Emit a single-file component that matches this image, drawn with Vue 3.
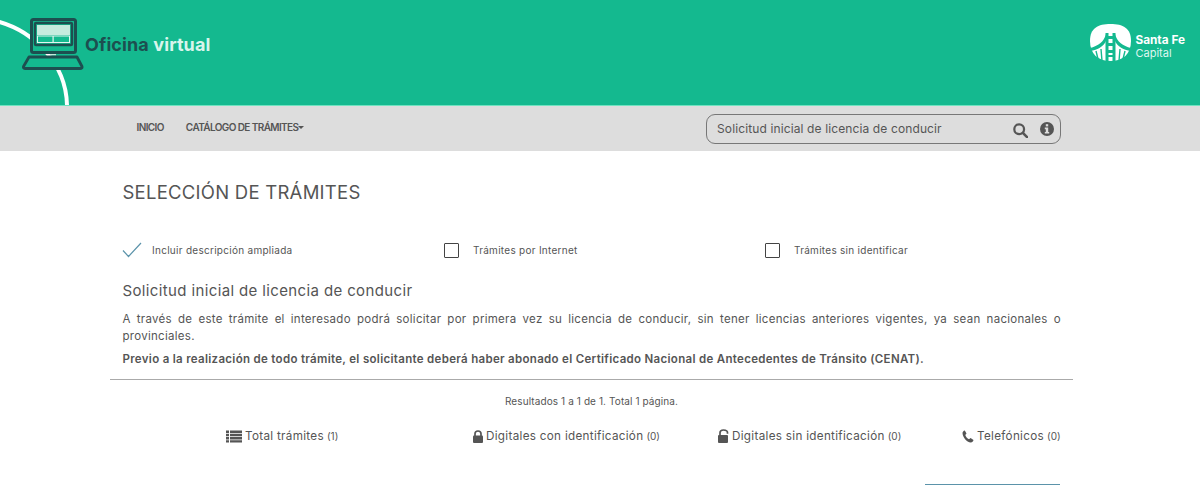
<script setup>
const stats = [
  { key: 'total', label: 'Total trámites', count: '(1)' },
  { key: 'lock', label: 'Digitales con identificación', count: '(0)' },
  { key: 'unlock', label: 'Digitales sin identificación', count: '(0)' },
  { key: 'phone', label: 'Telefónicos', count: '(0)' },
]
</script>

<template>
  <div class="page">
    <header class="header">
      <svg class="arc" width="80" height="105" viewBox="0 0 80 105" aria-hidden="true">
        <path d="M-4 21 C 32 30 66 62 67 105" fill="none" stroke="#fff" stroke-width="4" />
      </svg>
      <div class="brand">
        <svg class="laptop" width="62" height="54" viewBox="0 0 62 54" aria-hidden="true">
          <rect x="9.500" y="2.500" width="44" height="33" rx="2" fill="#14b98f" stroke="#1d4f50" stroke-width="3" />
          <rect x="13" y="6" width="37" height="22" rx="1" fill="#14b98f" stroke="#1d4f50" stroke-width="2.400" />
          <rect x="15" y="8" width="33" height="10" fill="#c6ecdf" />
          <rect x="15" y="18.500" width="33" height="1" fill="#e2f6ef" />
          <rect x="15" y="25" width="33" height="1" fill="#e2f6ef" />
          <rect x="30.500" y="19" width="1.200" height="7" fill="#e2f6ef" />
          <rect x="15" y="19" width="1" height="7" fill="#e2f6ef" />
          <rect x="47" y="19" width="1" height="7" fill="#e2f6ef" />
          <rect x="28" y="37" width="6" height="1.600" fill="#bfeadb" />
          <path d="M7 40 H55 L60 49.500 Q60.500 51.500 58 51.500 H3.500 Q1 51.500 1.500 49.500 Z" fill="#14b98f" stroke="#1d4f50" stroke-width="2.800" stroke-linejoin="round" />
        </svg>
        <div class="brand-text"><span class="dark">Oficina</span> <span class="light">virtual</span></div>
      </div>
      <div class="city">
        <svg width="41" height="37" viewBox="0 0 41 37" aria-hidden="true">
          <path d="M20.500 0 C33 0 41 4 41 17 C41 30 33 37 20.500 37 C8 37 0 30 0 17 C0 4 8 0 20.500 0 Z" fill="#fff" />
          <path d="M15.500 9 H18.500 V12 H22.500 V9 H25.500 V37 H22.500 V33 H18.500 V37 H15.500 Z M18.500 15 V19 H22.500 V15 Z M18.500 22 V26 H22.500 V22 Z M18.500 29 V31 H22.500 V29 Z" fill="#14b98f" />
          <path d="M16 10 C14 18 8 22 0 24 V27 C8 26 14 22 16 17 Z M25 10 C27 18 33 22 41 24 V27 C33 26 27 22 25 17 Z" fill="#14b98f" />
          <path d="M6 27 L8 35 M11 25 L12 37 M35 27 L33 35 M30 25 L29 37" stroke="#14b98f" stroke-width="1.400" />
        </svg>
        <div class="city-text"><strong>Santa Fe</strong><span>Capital</span></div>
      </div>
    </header>

    <nav class="nav">
      <div class="links">
        <a class="link">INICIO</a>
        <a class="link">CATÁLOGO DE TRÁMITES<i class="caret"></i></a>
      </div>
      <div class="search">
        <span class="search-text">Solicitud inicial de licencia de conducir</span>
        <svg class="search-icon" width="15" height="15" viewBox="0 0 16 16" aria-hidden="true">
          <circle cx="6.600" cy="6.600" r="5.200" fill="none" stroke="#555" stroke-width="2.400" />
          <path d="M10.500 10.500 L15 15" stroke="#555" stroke-width="2.800" stroke-linecap="round" />
        </svg>
        <svg width="14" height="14" viewBox="0 0 14 14" aria-hidden="true">
          <circle cx="7" cy="7" r="7" fill="#555" />
          <rect x="5.800" y="2.200" width="2.400" height="2.200" fill="#ddd" />
          <path d="M4.800 5.600 H8.200 V10 H9.200 V11.600 H4.800 V10 H5.800 V7.200 H4.800 Z" fill="#ddd" />
        </svg>
      </div>
    </nav>

    <main class="main">
      <h1 class="title">SELECCIÓN DE TRÁMITES</h1>
      <div class="options">
        <label class="option">
          <svg class="check" width="20" height="16" viewBox="0 0 20 16" aria-hidden="true">
            <path d="M1 8.500 L6.500 14.500 L19 1" fill="none" stroke="#5b93aa" stroke-width="1.200" />
          </svg>
          <span>Incluir descripción ampliada</span>
        </label>
        <label class="option"><i class="box"></i><span>Trámites por Internet</span></label>
        <label class="option"><i class="box"></i><span>Trámites sin identificar</span></label>
      </div>
      <h2 class="subtitle">Solicitud inicial de licencia de conducir</h2>
      <p class="desc">A través de este trámite el interesado podrá solicitar por primera vez su licencia de conducir, sin tener licencias anteriores vigentes, ya sean nacionales o provinciales.</p>
      <p class="notice">Previo a la realización de todo trámite, el solicitante deberá haber abonado el Certificado Nacional de Antecedentes de Tránsito (CENAT).</p>
      <hr class="rule" />
      <p class="results">Resultados 1 a 1 de 1. Total 1 página.</p>
      <div class="stats">
        <div v-for="s in stats" :key="s.key" class="stat" :class="'stat-' + s.key">
          <svg v-if="s.key === 'total'" width="16" height="13" viewBox="0 0 16 13" aria-hidden="true">
            <path d="M0 0.500H3V3H0ZM4 0.500H16V3H4ZM0 3.800H3V6.200H0ZM4 3.800H16V6.200H4ZM0 7H3V9.400H0ZM4 7H16V9.400H4ZM0 10.200H3V12.600H0ZM4 10.200H16V12.600H4Z" fill="#555" />
          </svg>
          <svg v-else-if="s.key === 'lock'" width="10" height="13" viewBox="0 0 10 13" aria-hidden="true">
            <path d="M2 6V3.800C2 2 3.300 1 5 1S8 2 8 3.800V6" fill="none" stroke="#555" stroke-width="1.700" />
            <rect x="0" y="5.500" width="10" height="7.500" rx="1" fill="#555" />
          </svg>
          <svg v-else-if="s.key === 'unlock'" width="11" height="14" viewBox="0 0 11 14" aria-hidden="true">
            <path d="M2 6.500V3.800C2 2 3.400 1 5.500 1S9.500 2 9.500 3.800V4.800" fill="none" stroke="#555" stroke-width="1.700" />
            <rect x="0" y="6" width="10" height="8" rx="1" fill="#555" />
          </svg>
          <svg v-else width="12" height="13" viewBox="0 0 12 13" aria-hidden="true">
            <path d="M2.800 0.500 L4.500 3.500 L3.300 5 C3.800 6.800 5.200 8.400 7 9.300 L8.600 8 L11.500 10 C11.200 11.500 10 12.600 8.800 12.500 C4.500 12 0.800 7.500 0.500 3 C0.500 1.800 1.500 0.800 2.800 0.500Z" fill="#555" />
          </svg>
          <span class="stat-label">{{ s.label }}</span>
          <small class="count">{{ s.count }}</small>
        </div>
      </div>
      <div class="tail"><i class="tail-line"></i></div>
    </main>
  </div>
</template>

<style>
html, body { margin: 0; background: #fff; overflow: hidden; }
</style>

<style scoped>
.page {
  width: 1200px;
  height: 485px;
  overflow: hidden;
  font-family: "Inter", "Open Sans", sans-serif;
  color: #555;
}
.header {
  position: relative;
  height: 105px;
  background: #14b98f;
  display: flex;
  justify-content: space-between;
  box-sizing: border-box;
  padding: 17px 15px 0 22px;
  overflow: hidden;
}
.arc { position: absolute; left: 0; top: 0; }
.brand { position: relative; display: flex; align-items: flex-start; }
.laptop { display: block; }
.brand-text {
  font-size: 18px;
  font-weight: 700;
  margin: 18px 0 0 1px;
  line-height: 20px;
  letter-spacing: 0.1px;
}
.dark { color: #1d4f50; }
.light { color: #d9f5ec; }
.city { display: flex; align-items: flex-start; gap: 4px; margin-top: 7px; }
.city-text { display: flex; flex-direction: column; color: #fff; font-size: 11.800px; line-height: 13px; margin-top: 10px; }
.city-text strong { font-weight: 700; }
.city-text span { font-size: 11px; font-weight: 400; color: #dff7ef; }
.nav {
  height: 46px;
  background: #ddd;
  border-top: 1px solid #6fe3c0;
  box-sizing: border-box;
  display: flex;
  justify-content: space-between;
  padding: 0 139px 0 136.500px;
}
.links { display: flex; gap: 22px; padding-top: 14px; }
.link {
  font-size: 10px;
  font-weight: 600;
  line-height: 14px;
  letter-spacing: -0.6px;
  color: #555;
}
.caret {
  display: inline-block;
  border-top: 3.500px solid #555;
  border-left: 3.500px solid transparent;
  border-right: 3.500px solid transparent;
  vertical-align: 2px;
}
.search {
  width: 355px;
  height: 30px;
  margin-top: 8px;
  box-sizing: border-box;
  border: 1px solid #777;
  border-radius: 9px;
  display: flex;
  align-items: center;
  padding: 0 6px 0 10px;
}
.search-text { flex: 1; font-size: 12px; color: #555; letter-spacing: 0.12px; margin-top: -2px; }
.search-icon { margin-right: 12px; margin-top: 2px; }
.main {
  width: 963px;
  margin-left: 110px;
}
.title {
  margin: 0;
  padding: 31px 0 0 12.500px;
  font-size: 18.500px;
  line-height: 21px;
  font-weight: 400;
  letter-spacing: 0.25px;
  color: #555;
}
.options {
  display: grid;
  grid-template-columns: 322px 321px 1fr;
  padding: 37px 0 0 12px;
  height: 20px;
}
.option { display: flex; align-items: center; gap: 14px; font-size: 10px; letter-spacing: 0.28px; color: #555; }
.option .check { margin-right: -4px; }
.box {
  width: 13px;
  height: 13px;
  border: 1px solid #444;
  border-radius: 1px;
}
.subtitle {
  margin: 0;
  padding: 21px 0 0 12.500px;
  font-size: 15px;
  line-height: 20px;
  font-weight: 400;
  letter-spacing: 0.37px;
  color: #555;
}
.desc {
  margin: 0;
  padding: 10px 12px 0 12.500px;
  font-size: 11.500px;
  line-height: 17px;
  text-align: justify;
  letter-spacing: 0.28px;
  color: #555;
}
.notice {
  margin: 0;
  padding: 6px 0 0 12.500px;
  font-size: 11.500px;
  line-height: 17px;
  font-weight: 600;
  letter-spacing: 0.31px;
  color: #555;
}
.rule {
  margin: 11px 0 0;
  border: 0;
  border-top: 1px solid #aaa;
}
.results {
  margin: 0;
  padding-top: 14px;
  font-size: 10px;
  line-height: 14px;
  letter-spacing: 0.1px;
  text-align: center;
  color: #555;
}
.stats {
  display: flex;
  padding: 17px 0 0 116px;
  height: 22px;
  align-items: center;
}
.stat { display: flex; align-items: center; gap: 3px; white-space: nowrap; font-size: 11.700px; color: #555; letter-spacing: 0.3px; }
.stat-total { width: 247px; }
.stat-lock { width: 245px; }
.stat-unlock { width: 244px; }
.count { font-size: 10px; letter-spacing: 0; }
.tail { display: flex; justify-content: flex-end; padding: 37px 13px 0 0; }
.tail-line { width: 135px; height: 1px; background: #5b93aa; }
</style>
